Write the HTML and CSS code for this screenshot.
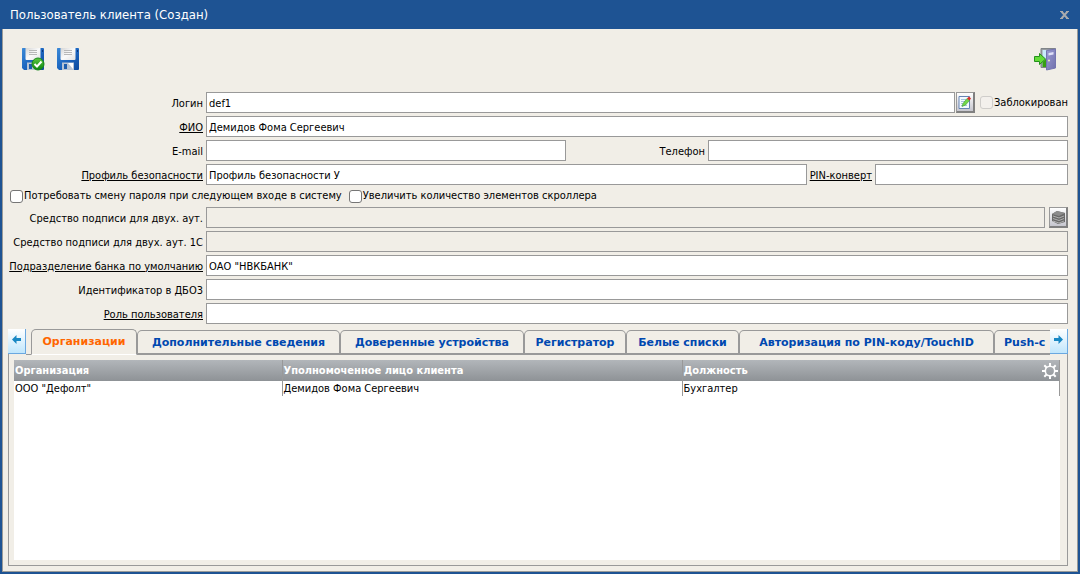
FILE: index.html
```html
<!DOCTYPE html>
<html lang="ru">
<head>
<meta charset="utf-8">
<title>Пользователь клиента</title>
<link rel="stylesheet" href="styles.css">
</head>
<body>
<svg width="0" height="0" class="defs" aria-hidden="true">
  <defs>
    <linearGradient id="blue" x1="0" y1="0" x2="1" y2="1"><stop offset="0" stop-color="#3c8ad8"/><stop offset=".5" stop-color="#1c66c0"/><stop offset="1" stop-color="#0c489c"/></linearGradient>
    <linearGradient id="paper" x1="0" y1="0" x2="1" y2="1"><stop offset="0" stop-color="#d4d4d4"/><stop offset=".5" stop-color="#fafafa"/><stop offset="1" stop-color="#e2e2e2"/></linearGradient>
    <linearGradient id="green" x1="0" y1="0" x2="0" y2="1"><stop offset="0" stop-color="#5cc840"/><stop offset="1" stop-color="#0c8410"/></linearGradient>
    <linearGradient id="door" x1="0" y1="0" x2="1" y2="1"><stop offset="0" stop-color="#9c9cd4"/><stop offset="1" stop-color="#7070ac"/></linearGradient>
    <symbol id="floppy" viewBox="0 0 24 24">
      <path d="M1 1.500Q1 1 1.500 1H22Q23 1 23 2V22Q23 23 22 23H3L1 21Z" fill="url(#blue)"/>
      <path d="M4.500 1H19.500V12Q19.500 13 18.500 13H5.500Q4.500 13 4.500 12Z" fill="url(#paper)"/>
      <path d="M8 3.500H16M8 5.500H16M8 7.500H16" stroke="#b8b8b8"/>
      <path d="M6 15.500H18V23H6Z" fill="#b8c4d4"/>
      <path d="M8 17H11V22H8Z" fill="#1c5cac"/>
      <path d="M12 16L17 22V16Z" fill="#fff"/>
      <path d="M21.500 3V5" stroke="#0a3478"/>
    </symbol>
  </defs>
</svg>
<div class="window">
  <header class="titlebar">
    <h1 class="title">Пользователь клиента (Создан)</h1>
    <button class="close" type="button" aria-label="Закрыть"><svg width="9" height="8" viewBox="0 0 9 8"><path d="M1.500 .5L7.500 7.500M7.500 .5L1.500 7.500" stroke="#a9abae" stroke-width="2"/><path d="M0 .5H3M6 .5H9M0 7.500H3M6 7.500H9" stroke="#a9abae"/></svg></button>
  </header>
  <main class="content">
    <div class="toolbar">
      <button class="tool" type="button" aria-label="Сохранить и закрыть"><svg width="24" height="24" viewBox="0 0 24 24"><use href="#floppy"/><circle cx="17" cy="17" r="6" fill="url(#green)" stroke="#18881c"/><path d="M13.500 17L16 19.500L20.500 14.500" fill="none" stroke="#fff" stroke-width="2"/></svg></button>
      <button class="tool" type="button" aria-label="Сохранить"><svg width="24" height="24"><use href="#floppy"/></svg></button>
      <button class="tool exit" type="button" aria-label="Выход"><svg width="24" height="24" viewBox="0 0 24 24"><path d="M8 1.500H22.500V20.500H8Z" fill="#989ca0" stroke="#808488"/><path d="M9.500 3H15V20H9.500Z" fill="#c8ecfa"/><path d="M9.500 15L14 11V20H9.500Z" fill="#36a010"/><path d="M13.500 3.500L22.500 2V21L13.500 23Z" fill="url(#door)" stroke="#7474b0"/><path d="M15.500 6L20.500 5V7.500L15.500 8.500Z" fill="#e0e0f8"/><circle cx="16" cy="13.500" r="1" fill="#f4f0c0"/><path d="M1.500 9.500H6.500V6.500L12.500 12L6.500 17.500V14.500H1.500Z" fill="#64dc38" stroke="#24901c"/></svg></button>
    </div>
    <form class="form">
      <div class="row">
        <label class="label" for="login">Логин</label>
        <input class="field" id="login" type="text" value="def1">
        <button class="mini edit" type="button" aria-label="Изменить логин"><svg width="15" height="15" viewBox="0 0 15 15"><path d="M2 1.500H12.500V13.500H2Z" fill="#f4faff" stroke="#6684b4"/><path d="M4 4.500H9M4 6.500H8M4 8.500H6M4 10.500H10" stroke="#a8c4dc"/><path d="M5 11.500L6 8.500L10 3.500L12.500 5.500L8.500 10Z" fill="#72d848" stroke="#3c9830" stroke-width=".6"/><path d="M10 3.500L12 1.500L14 3.500L12.500 5.500Z" fill="#d8302c"/></svg></button>
        <label class="check locked"><input class="box" type="checkbox" disabled><span>Заблокирован</span></label>
      </div>
      <div class="row">
        <label class="label" for="name"><a class="link" href="#name">ФИО</a></label>
        <input class="field" id="name" type="text" value="Демидов Фома Сергеевич">
      </div>
      <div class="row">
        <label class="label" for="email">E-mail</label>
        <input class="field" id="email" type="text">
        <label class="label phone" for="phone">Телефон</label>
        <input class="field" id="phone" type="text">
      </div>
      <div class="row">
        <label class="label" for="profile"><a class="link" href="#profile">Профиль безопасности</a></label>
        <input class="field" id="profile" type="text" value="Профиль безопасности У">
        <label class="label pin" for="pin"><a class="link" href="#pin">PIN-конверт</a></label>
        <input class="field short" id="pin" type="text">
      </div>
      <div class="checks">
        <label class="check"><input class="box" type="checkbox"><span>Потребовать смену пароля при следующем входе в систему</span></label>
        <label class="check"><input class="box" type="checkbox"><span>Увеличить количество элементов скроллера</span></label>
      </div>
      <div class="row">
        <label class="label" for="sign">Средство подписи для двух. аут.</label>
        <input class="field" id="sign" type="text" disabled>
        <button class="mini pick" type="button" aria-label="Выбрать средство подписи"><svg width="15" height="15" viewBox="0 0 15 15"><path d="M1 4L6 1L14 3V12L7 14L1 11Z" fill="#6a6a6a"/><path d="M1 4L6 1L14 3L8 6Z" fill="#8c8c8c"/><path d="M2 6L8 8L13 6M2 8.500L8 10.500L13 8.500M2 11L8 13L13 11" fill="none" stroke="#b0b0b0"/></svg></button>
      </div>
      <div class="row">
        <label class="label" for="sign1c">Средство подписи для двух. аут. 1С</label>
        <input class="field" id="sign1c" type="text" disabled>
      </div>
      <div class="row">
        <label class="label" for="branch"><a class="link" href="#branch">Подразделение банка по умолчанию</a></label>
        <input class="field" id="branch" type="text" value="ОАО &quot;НВКБАНК&quot;">
      </div>
      <div class="row">
        <label class="label" for="dbo">Идентификатор в ДБО3</label>
        <input class="field" id="dbo" type="text">
      </div>
      <div class="row">
        <label class="label" for="role"><a class="link" href="#role">Роль пользователя</a></label>
        <input class="field" id="role" type="text">
      </div>
    </form>
    <div class="tabstrip">
      <button class="scroll" type="button" aria-label="Назад"><svg width="9" height="9" viewBox="0 0 9 9"><path d="M0 4.500L4.500 0V3H9V6H4.500V9Z" fill="#1888c4"/></svg></button>
      <div class="tabs" role="tablist">
        <button class="tab active" type="button" role="tab" aria-selected="true">Организации</button>
        <button class="tab details" type="button" role="tab">Дополнительные сведения</button>
        <button class="tab devices" type="button" role="tab">Доверенные устройства</button>
        <button class="tab registrar" type="button" role="tab">Регистратор</button>
        <button class="tab whitelist" type="button" role="tab">Белые списки</button>
        <button class="tab auth" type="button" role="tab">Авторизация по PIN-коду/TouchID</button>
        <button class="tab push" type="button" role="tab">Push-с</button>
      </div>
      <button class="scroll" type="button" aria-label="Вперёд"><svg width="9" height="9" viewBox="0 0 9 9"><path d="M9 4.500L4.500 0V3H0V6H4.500V9Z" fill="#1888c4"/></svg></button>
    </div>
    <section class="panel">
      <div class="sheet">
        <table class="grid">
          <thead>
            <tr><th class="org">Организация</th><th class="person">Уполномоченное лицо клиента</th><th><div class="last"><span>Должность</span><button class="gear" type="button" aria-label="Настройки"><svg width="16" height="16" viewBox="0 0 16 16"><circle cx="8" cy="8" r="4.700" fill="none" stroke="#fff" stroke-width="1.600"/><path d="M8 0V3M8 13V16M0 8H3M13 8H16M2.300 2.300L4.500 4.500M11.500 11.500L13.700 13.700M13.700 2.300L11.500 4.500M4.500 11.500L2.300 13.700" stroke="#fff" stroke-width="2"/></svg></button></div></th></tr>
          </thead>
          <tbody>
            <tr><td>ООО "Дефолт"</td><td>Демидов Фома Сергеевич</td><td>Бухгалтер</td></tr>
          </tbody>
        </table>
      </div>
    </section>
  </main>
</div>
</body>
</html>
```
FILE: styles.css
```css
* { box-sizing: border-box; }
body {
  margin: 0;
  font: 11px/14px Tahoma, "DejaVu Sans Condensed", "DejaVu Sans", sans-serif;
  color: #000;
  background: #1e5393;
}
button, input { font: inherit; color: inherit; margin: 0; }
button { padding: 0; border: 0; background: none; }
svg { display: block; }
.defs { position: absolute; }
.window {
  display: flex;
  flex-direction: column;
  min-height: 100vh;
  padding: 0 2px 2px;
}
.titlebar {
  display: flex;
  align-items: center;
  justify-content: space-between;
  height: 29px;
  padding: 0 9px 0 8px;
}
.title { margin: 0; color: #fff; font-size: 13px; line-height: 16px; font-weight: normal; }
.content {
  flex: 1;
  display: flex;
  flex-direction: column;
  padding: 18px 9px 5px 5px;
  background: #f1eee7;
  border: 1px solid #9b9b98;
  border-top: 0;
}
.toolbar { display: flex; gap: 11px; padding: 0 11px 0 13px; height: 45px; }
.tool { height: 24px; }
.exit { margin-left: auto; }
.form { display: flex; flex-direction: column; gap: 3px; }
.row { display: flex; align-items: center; height: 21px; }
.label { flex: none; width: 195px; margin-right: 3px; padding-top: 2px; text-align: right; white-space: nowrap; }
.phone { width: 139px; margin-left: 0; }
.pin { width: auto; margin-left: 3px; }
.link { color: inherit; text-decoration: underline; text-underline-offset: 1px; }
.field {
  flex: 1 1 0;
  min-width: 0;
  height: 21px;
  padding: 2px 2px 0;
  border: 1px solid #999;
  border-radius: 0;
  background: #fff;
}
.field:disabled { background: #f1eee7; }
.short { flex: none; width: 193px; }
.mini {
  flex: none;
  display: flex;
  align-items: center;
  justify-content: center;
  width: 19px;
  height: 21px;
  border: 1px solid #999;
  border-right: 2px solid #808080;
  border-bottom: 2px solid #808080;
  background: linear-gradient(#fff, #c6c6ce);
}
.edit { margin-left: 1px; }
.pick { margin-left: 4px; }
.check { display: flex; align-items: center; gap: 1px; white-space: nowrap; }
.locked { margin-left: 5px; }
.box {
  appearance: none;
  width: 13px;
  height: 13px;
  border: 1px solid #767676;
  border-radius: 3px;
  background: #fff;
}
.box:disabled { border-color: #cfcdca; background: #f3f0ec; }
.checks { display: flex; gap: 7px; height: 16px; padding-left: 2px; }
.tabstrip { display: flex; height: 25px; margin-top: 5px; }
.scroll {
  flex: none;
  display: flex;
  justify-content: center;
  width: 18px;
  height: 25px;
  padding-top: 6px;
  border: solid #6aa8e0;
  border-width: 0 1px 1px 0;
  background: linear-gradient(#fff, #c0e6fc);
}
.tabs {
  flex: 1;
  min-width: 0;
  display: flex;
  align-items: flex-end;
  height: 26px;
  padding-left: 5px;
  overflow: hidden;
  background: linear-gradient(#999, #999) bottom / 100% 1px no-repeat;
}
.tab {
  flex: none;
  height: 25px;
  padding: 1px 9px 0;
  border: 1px solid #999;
  border-bottom-width: 2px;
  border-radius: 5px 5px 0 0;
  background: #f1eee7;
  color: #0048b0;
  font: bold 11px/14px Verdana, "DejaVu Sans", sans-serif;
  white-space: nowrap;
}
.active { min-width: 106px; height: 26px; padding-top: 0; color: #ff6600; border-bottom: 1px solid #fff; }
.details { min-width: 203px; }
.devices { min-width: 184px; }
.registrar { min-width: 102px; }
.whitelist { min-width: 113px; }
.auth { min-width: 255px; }
.push { min-width: 96px; text-align: left; }
.panel { flex: 1; display: flex; padding: 6px 7px 5px 5px; border: 1px solid #999; border-top: 0; }
.sheet { flex: 1; background: #fff; }
.grid { width: 100%; border-collapse: collapse; table-layout: fixed; }
.grid th {
  height: 21px;
  padding: 0 1px;
  text-align: left;
  color: #fff;
  font-size: 11px;
}
.grid thead { background: linear-gradient(#b2b6ba, #8e9296); }
.grid td { height: 15px; padding: 1px 1px 0; }
.grid th, .grid td { border-right: 1px solid #999; }
.org { width: 268px; }
.person { width: 400px; }
.last { display: flex; align-items: center; justify-content: space-between; }
```
